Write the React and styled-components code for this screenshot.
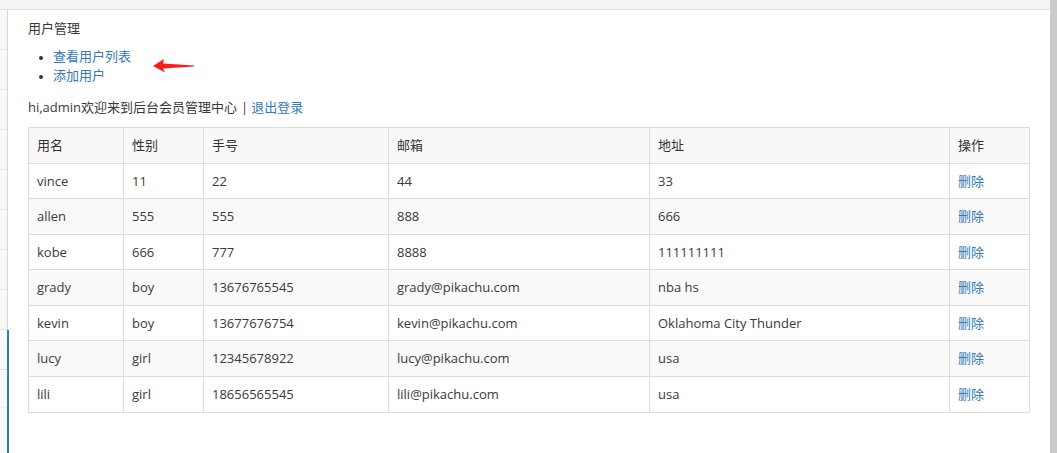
import styled, { createGlobalStyle } from "styled-components";

const GlobalStyle = createGlobalStyle`
  html, body {
    margin: 0;
    padding: 0;
    height: 100%;
    overflow: hidden;
    background: #fff;
  }
  body {
    font-family: "Open Sans", "Noto Sans CJK SC", sans-serif;
    font-size: 13px;
    color: #393939;
  }
  #root {
    height: 100%;
  }
`;

const Page = styled.div`
  display: flex;
  height: 100%;
`;

const Frame = styled.div`
  flex: 1;
  display: flex;
  flex-direction: column;
  min-width: 0;
`;

const TopBar = styled.div`
  height: 9px;
  background: #f4f4f4;
  border-bottom: 1px solid #e2e2e2;
`;

const Body = styled.div`
  flex: 1;
  display: flex;
  min-height: 0;
`;

const Sidebar = styled.div`
  flex: 0 0 7px;
  background: #f8f8f8;
  border-right: 1px solid #d6d6d6;
  display: flex;
  flex-direction: column;
`;

const SideItem = styled.div`
  height: 39px;
  border-bottom: 1px solid #e5e5e5;
`;

const SideSub = styled.div`
  flex: 1;
  margin-right: -2px;
  border-right: 2px solid #2b7dbc;
  display: flex;
  flex-direction: column;
`;

const SubItem = styled.div`
  height: ${(p) => p.$h}px;
  border-bottom: 1px ${(p) => (p.$dotted ? "dotted" : "solid")} #e4e4e4;
`;

const Scrollbar = styled.div`
  flex: 0 0 7px;
  background: #cbcbcb;
`;

const Main = styled.main`
  position: relative;
  flex: 1;
  min-width: 0;
  padding: 8px 21px 0 20px;
`;

const Title = styled.div`
  line-height: 20px;
`;

const NavList = styled.ul`
  margin: 9px 0 12px;
  padding-left: 25px;
  line-height: 19px;
`;

const NavItem = styled.li`
  &::marker {
    font-size: 10px;
    color: #333;
  }
`;

const Link = styled.a`
  color: #337ab7;
  text-decoration: none;
  cursor: pointer;
`;

const Welcome = styled.div`
  line-height: 20px;
  margin-bottom: 10px;
`;

const Sep = styled.span`
  margin: 0 3px 0 4px;
`;

const Arrow = styled.svg`
  position: absolute;
  left: 144px;
  top: 48px;
`;

const Table = styled.table`
  width: 100%;
  border-collapse: collapse;
  table-layout: fixed;
`;

const Th = styled.th`
  box-sizing: border-box;
  width: ${(p) => p.$w}px;
  text-align: left;
  font-weight: normal;
  color: #333;
  padding: 8px;
  line-height: 1.42857;
  border: 1px solid #ddd;
  background: #f8f8f8;
`;

const Row = styled.tr`
  background: ${(p) => (p.$striped ? "#f9f9f9" : "#fff")};
`;

const Td = styled.td`
  padding: 8px;
  line-height: 1.42857;
  border: 1px solid #ddd;
  white-space: nowrap;
  overflow: hidden;
`;

const columns = [
  { title: "用名", w: 95 },
  { title: "性别", w: 80 },
  { title: "手号", w: 185 },
  { title: "邮箱", w: 261 },
  { title: "地址", w: 300 },
  { title: "操作", w: 80 },
];

const users = [
  ["vince", "11", "22", "44", "33"],
  ["allen", "555", "555", "888", "666"],
  ["kobe", "666", "777", "8888", "111111111"],
  ["grady", "boy", "13676765545", "grady@pikachu.com", "nba hs"],
  ["kevin", "boy", "13677676754", "kevin@pikachu.com", "Oklahoma City Thunder"],
  ["lucy", "girl", "12345678922", "lucy@pikachu.com", "usa"],
  ["lili", "girl", "18656565545", "lili@pikachu.com", "usa"],
];

export default function App() {
  return (
    <Page>
      <GlobalStyle />
      <Frame>
        <TopBar />
        <Body>
          <Sidebar>
            {Array.from({ length: 8 }).map((_, i) => (
              <SideItem key={i} />
            ))}
            <SideSub>
              <SubItem $h={39} />
              <SubItem $h={37} $dotted />
            </SideSub>
          </Sidebar>
          <Main>
            <Title>用户管理</Title>
            <NavList>
              <NavItem>
                <Link>查看用户列表</Link>
              </NavItem>
              <NavItem>
                <Link>添加用户</Link>
              </NavItem>
            </NavList>
            <Arrow width="46" height="18" viewBox="0 0 46 18">
              <polygon
                points="1,8 12,1 11,5.5 42,7.5 42,8.5 11,10.5 13,14.5"
                fill="#ff1a1a"
              />
            </Arrow>
            <Welcome>
              hi,admin欢迎来到后台会员管理中心
              <Sep>|</Sep>
              <Link>退出登录</Link>
            </Welcome>
            <Table>
              <thead>
                <tr>
                  {columns.map((c) => (
                    <Th key={c.title} $w={c.w}>
                      {c.title}
                    </Th>
                  ))}
                </tr>
              </thead>
              <tbody>
                {users.map((u, i) => (
                  <Row key={u[0]} $striped={i % 2 === 1}>
                    {u.map((v, j) => (
                      <Td key={j}>{v}</Td>
                    ))}
                    <Td>
                      <Link>删除</Link>
                    </Td>
                  </Row>
                ))}
              </tbody>
            </Table>
          </Main>
        </Body>
      </Frame>
      <Scrollbar />
    </Page>
  );
}
